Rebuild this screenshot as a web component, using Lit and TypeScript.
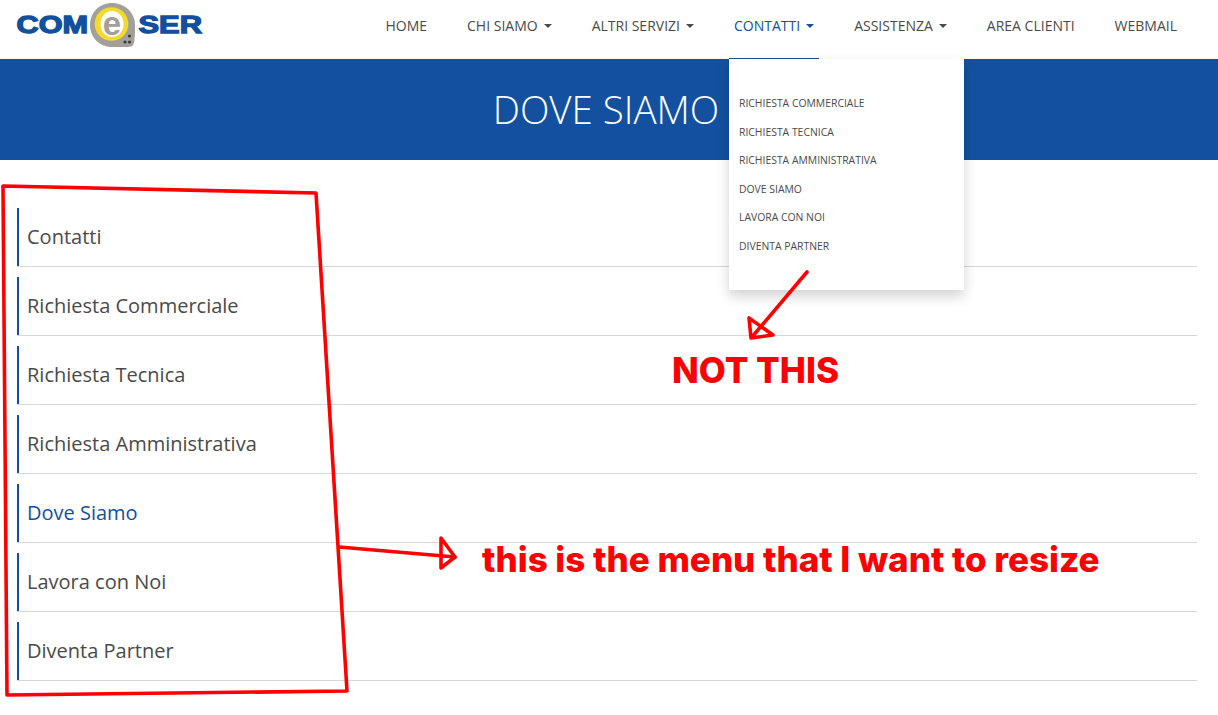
import { LitElement, html, css, svg } from "lit";
import { customElement } from "lit/decorators.js";

const NAV = [
  { label: "HOME" },
  { label: "CHI SIAMO", caret: true },
  { label: "ALTRI SERVIZI", caret: true },
  { label: "CONTATTI", caret: true, active: true },
  { label: "ASSISTENZA", caret: true },
  { label: "AREA CLIENTI" },
  { label: "WEBMAIL" },
];
const DROP = ["RICHIESTA COMMERCIALE", "RICHIESTA TECNICA", "RICHIESTA AMMINISTRATIVA", "DOVE SIAMO", "LAVORA CON NOI", "DIVENTA PARTNER"];
const SIDE = ["Contatti", "Richiesta Commerciale", "Richiesta Tecnica", "Richiesta Amministrativa", "Dove Siamo", "Lavora con Noi", "Diventa Partner"];

const logo = svg`
  <svg class="logo" width="220" height="59" viewBox="0 0 220 59">
    <text x="16.5" y="33" class="lt" textLength="71.5" lengthAdjust="spacingAndGlyphs">COM</text>
    <text x="138.5" y="33" class="lt" textLength="63.5" lengthAdjust="spacingAndGlyphs">SER</text>
    <path d="M112 3 C125 3 135 13 135 25 C135 31 135 38 134 43 C133 46 131 47 128 47 C122 47 117 47 112 47 C99 47 90 37 90 25 C90 13 99 3 112 3 Z" fill="#a3a09a"/>
    <circle cx="111.5" cy="24" r="16.8" fill="#f5d92e"/>
    <ellipse cx="112" cy="24" rx="11.5" ry="13" fill="#fff"/>
    <text x="112" y="35" class="le" text-anchor="middle">e</text>
    <g fill="#3a3a3a">
      <circle cx="129.5" cy="36" r="1.6"/><circle cx="129.5" cy="42" r="1.6"/><circle cx="125" cy="42" r="1.6"/>
    </g>
  </svg>`;

const marks = svg`
  <svg class="marks" width="1218" height="715" viewBox="0 0 1218 715">
    <g fill="none" stroke="#fe0000" stroke-width="3.6" stroke-linejoin="round" stroke-linecap="round">
      <path d="M3 186 L316 193 L347 691 L7 695 Z"/>
      <path d="M339 547 L455 557"/>
      <path d="M441 538 L455 557 L441 568 Z"/>
      <path d="M807 272 L752 337"/>
      <path d="M749 318 L751 338 L773 335 Z"/>
    </g>
  </svg>`;

@customElement("app-root")
export class AppRoot extends LitElement {
  static styles = css`
    :host {
      display: block;
      position: relative;
      width: 1218px;
      height: 715px;
      overflow: hidden;
      background: #fff;
      font-family: "Open Sans", sans-serif;
      color: #4a4a4a;
    }
    header {
      height: 59px;
      display: flex;
      align-items: flex-start;
      justify-content: space-between;
      padding-right: 21px;
    }
    .logo { display: block; flex: none; }
    .lt {
      font-family: "Liberation Sans", sans-serif;
      font-weight: 700;
      font-size: 23.5px;
      fill: #12509e;
      stroke: #12509e;
      stroke-width: 1.3px;
    }
    .le {
      font-family: "Liberation Sans", sans-serif;
      font-weight: 700;
      font-size: 33px;
      fill: #a3a09a;
    }
    nav { display: flex; }
    .item {
      position: relative;
      height: 59px;
      box-sizing: border-box;
      padding: 16px 20px 0;
      font-size: 14px;
      line-height: 19px;
      white-space: nowrap;
      display: flex;
      align-items: flex-start;
    }
    .item.active { color: #12509e; }
    .item.active::after {
      content: "";
      position: absolute;
      left: 15px;
      right: 15px;
      bottom: 0;
      height: 1px;
      background: #12509e;
    }
    .caret {
      width: 0;
      height: 0;
      margin: 8px 0 0 6px;
      border-left: 4px solid transparent;
      border-right: 4px solid transparent;
      border-top: 4px solid currentColor;
    }
    .banner {
      height: 101px;
      background: #1351a0;
      color: #fff;
      display: flex;
      align-items: center;
      justify-content: center;
      padding-right: 6px;
      box-sizing: border-box;
    }
    h1 {
      margin: 0;
      font-size: 38.5px;
      font-weight: 300;
      line-height: 1;
    }
    .side {
      list-style: none;
      margin: 0;
      padding: 48px 21px 0 17px;
      display: flex;
      flex-direction: column;
      gap: 10px;
    }
    .side li {
      height: 59px;
      box-sizing: border-box;
      padding: 0 0 0 10px;
      font-size: 20px;
      line-height: 58px;
      border-bottom: 1px solid #d6d6d6;
      position: relative;
    }
    .side li::before {
      content: "";
      position: absolute;
      left: 0;
      top: 0;
      bottom: 0;
      width: 2px;
      background: #12509e;
    }
    .side li.cur { color: #12509e; }
    .drop {
      position: absolute;
      left: 729px;
      top: 59px;
      width: 235px;
      height: 231px;
      box-sizing: border-box;
      padding: 30px 10px 0;
      background: #fff;
      box-shadow: 0 6px 12px rgba(0, 0, 0, 0.18);
      font-size: 10.4px;
      display: flex;
      flex-direction: column;
    }
    .drop div { height: 28.5px; line-height: 28.5px; white-space: nowrap; }
    .marks { position: absolute; left: 0; top: 0; pointer-events: none; }
    .note {
      position: absolute;
      font-family: "Inter", sans-serif;
      font-weight: 800;
      color: #fe0000;
      white-space: nowrap;
      line-height: 1;
    }
    .n1 { left: 672px; top: 353px; font-size: 35px; }
    .n2 { left: 482px; top: 542px; font-size: 35px; }
  `;

  render() {
    return html`
      <header>
        ${logo}
        <nav>
          ${NAV.map(
            (n) => html`<div class="item ${n.active ? "active" : ""}">${n.label}${n.caret ? html`<span class="caret"></span>` : ""}</div>`
          )}
        </nav>
      </header>
      <section class="banner"><h1>DOVE SIAMO</h1></section>
      <ul class="side">
        ${SIDE.map((s) => html`<li class="${s === "Dove Siamo" ? "cur" : ""}">${s}</li>`)}
      </ul>
      <div class="drop">${DROP.map((d) => html`<div>${d}</div>`)}</div>
      ${marks}
      <div class="note n1">NOT THIS</div>
      <div class="note n2">this is the menu that I want to resize</div>
    `;
  }
}
